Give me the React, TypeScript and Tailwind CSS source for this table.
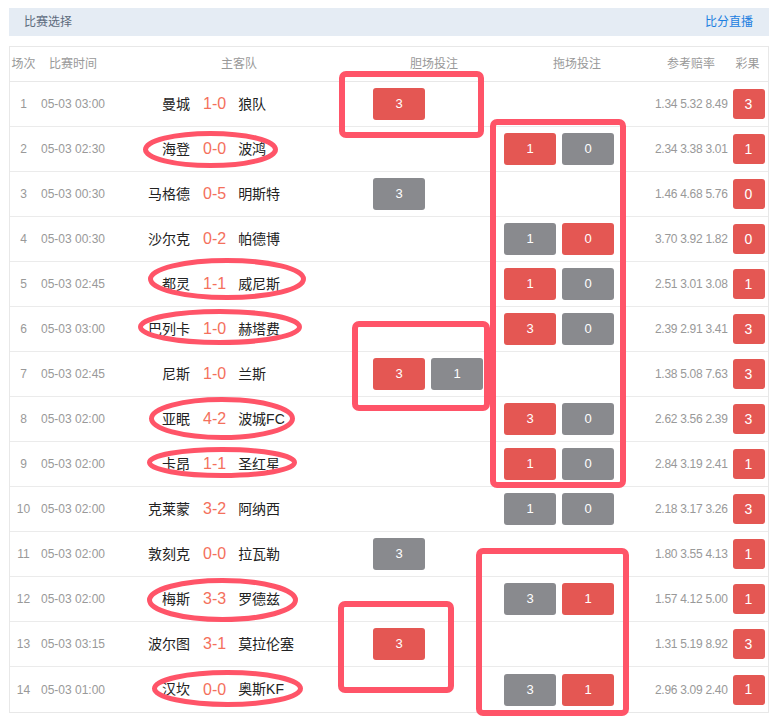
import React from 'react'

type Bet = { v: string; hit: boolean }

type Match = {
  no: number
  time: string
  home: string
  score: string
  away: string
  dan: Bet[]
  tuo: Bet[]
  odds: string
  result: string
}

const r = (v: string): Bet => ({ v, hit: true })
const g = (v: string): Bet => ({ v, hit: false })

const MATCHES: Match[] = [
  { no: 1, time: '05-03 03:00', home: '曼城', score: '1-0', away: '狼队', dan: [r('3')], tuo: [], odds: '1.34 5.32 8.49', result: '3' },
  { no: 2, time: '05-03 02:30', home: '海登', score: '0-0', away: '波鸿', dan: [], tuo: [r('1'), g('0')], odds: '2.34 3.38 3.01', result: '1' },
  { no: 3, time: '05-03 00:30', home: '马格德', score: '0-5', away: '明斯特', dan: [g('3')], tuo: [], odds: '1.46 4.68 5.76', result: '0' },
  { no: 4, time: '05-03 00:30', home: '沙尔克', score: '0-2', away: '帕德博', dan: [], tuo: [g('1'), r('0')], odds: '3.70 3.92 1.82', result: '0' },
  { no: 5, time: '05-03 02:45', home: '都灵', score: '1-1', away: '威尼斯', dan: [], tuo: [r('1'), g('0')], odds: '2.51 3.01 3.08', result: '1' },
  { no: 6, time: '05-03 03:00', home: '巴列卡', score: '1-0', away: '赫塔费', dan: [], tuo: [r('3'), g('0')], odds: '2.39 2.91 3.41', result: '3' },
  { no: 7, time: '05-03 02:45', home: '尼斯', score: '1-0', away: '兰斯', dan: [r('3'), g('1')], tuo: [], odds: '1.38 5.08 7.63', result: '3' },
  { no: 8, time: '05-03 02:00', home: '亚眠', score: '4-2', away: '波城FC', dan: [], tuo: [r('3'), g('0')], odds: '2.62 3.56 2.39', result: '3' },
  { no: 9, time: '05-03 02:00', home: '卡昂', score: '1-1', away: '圣红星', dan: [], tuo: [r('1'), g('0')], odds: '2.84 3.19 2.41', result: '1' },
  { no: 10, time: '05-03 02:00', home: '克莱蒙', score: '3-2', away: '阿纳西', dan: [], tuo: [g('1'), g('0')], odds: '2.18 3.17 3.26', result: '3' },
  { no: 11, time: '05-03 02:00', home: '敦刻克', score: '0-0', away: '拉瓦勒', dan: [g('3')], tuo: [], odds: '1.80 3.55 4.13', result: '1' },
  { no: 12, time: '05-03 02:00', home: '梅斯', score: '3-3', away: '罗德兹', dan: [], tuo: [g('3'), r('1')], odds: '1.57 4.12 5.00', result: '1' },
  { no: 13, time: '05-03 03:15', home: '波尔图', score: '3-1', away: '莫拉伦塞', dan: [r('3')], tuo: [], odds: '1.31 5.19 8.92', result: '3' },
  { no: 14, time: '05-03 01:00', home: '汉坎', score: '0-0', away: '奥斯KF', dan: [], tuo: [g('3'), r('1')], odds: '2.96 3.09 2.40', result: '1' },
]

const GRID = 'grid grid-cols-[27px_72px_260px_130px_156px_72px_41px]'

function BetButtons({ bets }: { bets: Bet[] }) {
  return (
    <div className="flex items-center gap-[6px] pl-[4px]">
      {bets.map((b, i) => (
        <span
          key={i}
          className={`w-[52px] h-[32px] rounded-[3px] flex items-center justify-center text-[13px] text-white ${
            b.hit ? 'bg-[#e45753]' : 'bg-[#898a8e]'
          }`}
        >
          {b.v}
        </span>
      ))}
    </div>
  )
}

// hand-drawn review marks laid over the table
function Marks() {
  const c = '#ff5468'
  return (
    <svg className="absolute top-0 left-0 pointer-events-none" width="779" height="722" fill="none">
      <g stroke={c} strokeWidth="6">
        <rect x="342" y="74" width="139" height="61" rx="4" />
        <rect x="493" y="122" width="130" height="363" rx="4" />
        <rect x="355" y="324" width="132" height="84" rx="4" />
        <rect x="341" y="604" width="110" height="86" rx="4" />
        <rect x="479" y="551" width="147" height="162" rx="4" />
      </g>
      <g stroke={c} strokeWidth="5">
        <ellipse cx="210.5" cy="149.5" rx="65" ry="16" />
        <ellipse cx="227" cy="279" rx="76.5" ry="18.5" />
        <ellipse cx="220" cy="327" rx="79.5" ry="15.5" />
        <ellipse cx="222" cy="418.5" rx="70.5" ry="19" />
        <ellipse cx="222" cy="462.5" rx="72.5" ry="13" />
        <ellipse cx="222.5" cy="600" rx="73" ry="19.5" />
        <ellipse cx="227.5" cy="688.5" rx="73" ry="16" />
      </g>
    </svg>
  )
}

export default function App() {
  return (
    <div
      className="relative w-[779px] h-[722px] bg-white overflow-hidden"
      style={{ fontFamily: '"Liberation Sans", "Noto Sans CJK SC", sans-serif' }}
    >
      <div className="ml-[9px] w-[760px] pt-[8px]">
        {/* title bar */}
        <div className="h-[28px] bg-[#e5ecf4] flex items-center justify-between pl-[15px] pr-[16px] text-[12px]">
          <span className="text-[#5d6b7d]">比赛选择</span>
          <span className="text-[#1b7ee0]">比分直播</span>
        </div>

        {/* table */}
        <div className="mt-[10px] border border-[#e8e8e8]">
          <div className={`${GRID} h-[35px] border-b border-[#e8e8e8] items-center text-[12px] text-[#999] text-center`}>
            <span>场次</span>
            <span>比赛时间</span>
            <span>主客队</span>
            <span>胆场投注</span>
            <span>拖场投注</span>
            <span>参考赔率</span>
            <span>彩果</span>
          </div>

          {MATCHES.map(m => (
            <div
              key={m.no}
              className={`${GRID} h-[45px] items-center border-b border-[#ebebeb] last:border-b-0`}
            >
              <span className="text-center text-[12px] text-[#999]">{m.no}</span>
              <span className="text-center text-[12px] text-[#999] whitespace-nowrap">{m.time}</span>
              <div className="flex items-center whitespace-nowrap">
                <span className="w-[81px] text-right text-[14px] text-[#222]">{m.home}</span>
                <span className="ml-[13px] text-[16px] text-[#f4705c]">{m.score}</span>
                <span className="ml-[12px] text-[14px] text-[#222]">{m.away}</span>
              </div>
              <BetButtons bets={m.dan} />
              <div className="pl-[1px]">
                <BetButtons bets={m.tuo} />
              </div>
              <span className="text-center text-[12px] text-[#999] whitespace-nowrap tracking-[-0.3px] pr-[2px]">
                {m.odds}
              </span>
              <div className="flex justify-center pl-[2px]">
                <span className="w-[32px] h-[30px] rounded-[3px] bg-[#e45753] text-white text-[14px] flex items-center justify-center">
                  {m.result}
                </span>
              </div>
            </div>
          ))}
        </div>
      </div>
      <Marks />
    </div>
  )
}
